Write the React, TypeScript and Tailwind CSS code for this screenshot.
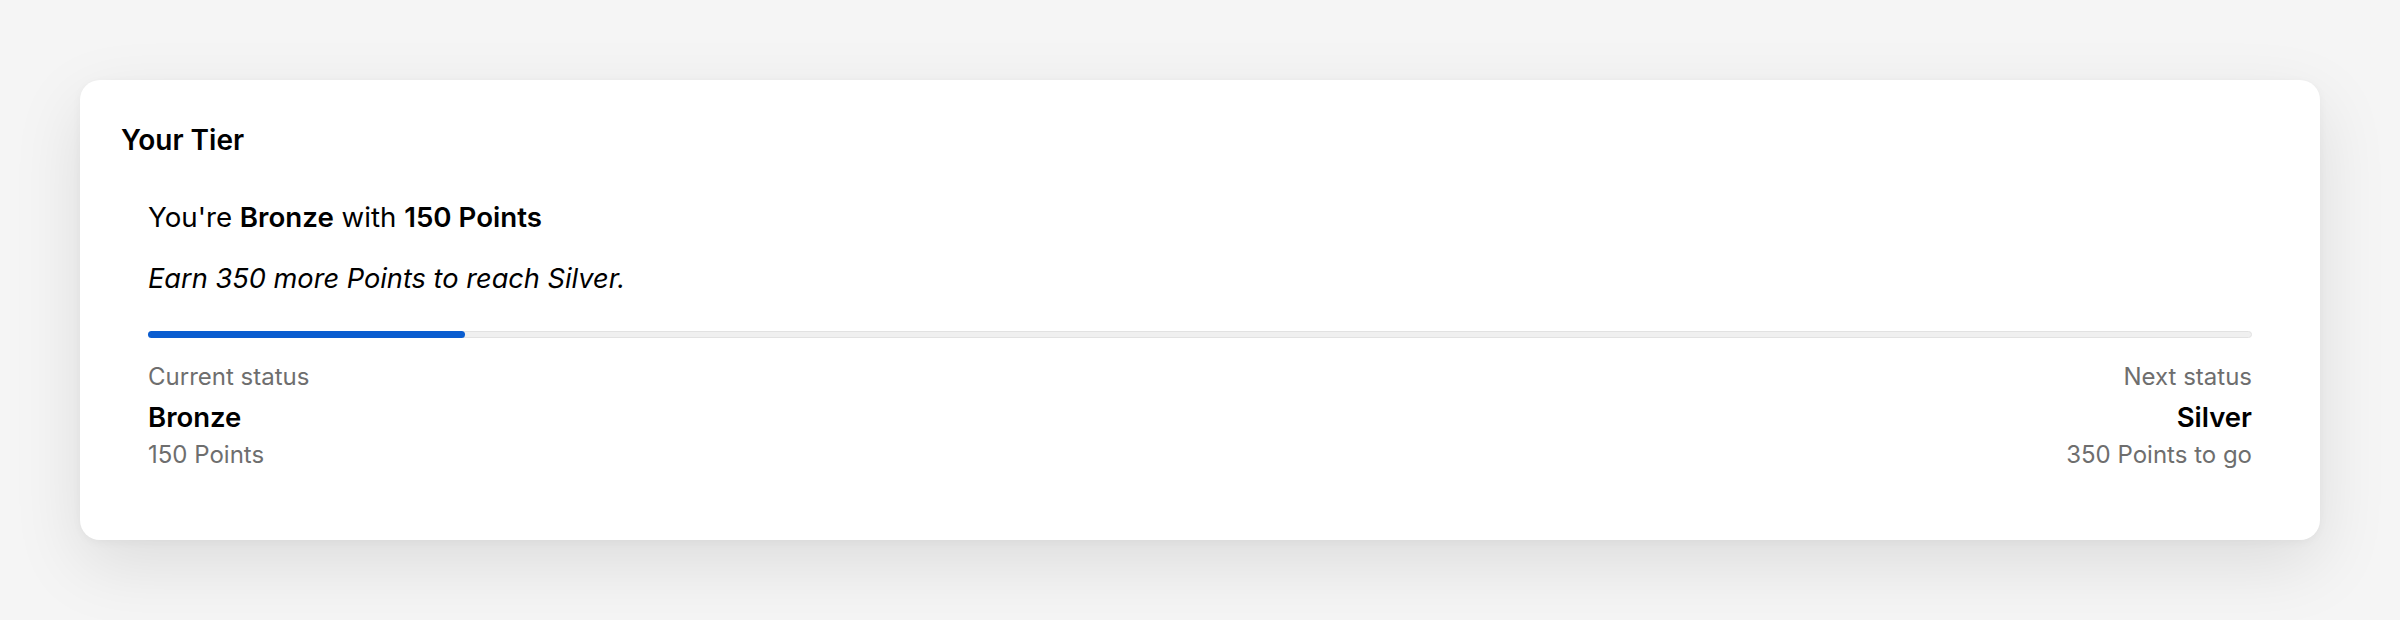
const tier = {
  current: 'Bronze',
  next: 'Silver',
  points: 150,
  target: 500,
}

export default function App() {
  const remaining = tier.target - tier.points
  const progress = 15.1

  return (
    <div className="min-h-screen bg-[#f5f5f5] p-20 font-['Inter','Liberation_Sans',sans-serif] text-black">
      <div className="rounded-[20px] bg-white px-[41px] pt-[43px] pb-[70px] shadow-[0_24px_70px_rgba(0,0,0,0.10),0_2px_10px_rgba(0,0,0,0.04)]">
        <h2 className="text-[28px] leading-[34px] font-semibold">Your Tier</h2>

        <div className="mt-[42px] px-[27px]">
          <p className="text-[27.7px] leading-[36px]">
            You're <span className="font-semibold">{tier.current}</span> with{' '}
            <span className="font-semibold">{tier.points} Points</span>
          </p>
          <p className="mt-[26px] text-[27.2px] leading-[36px] italic">
            Earn {remaining} more Points to reach {tier.next}.
          </p>

          {/* progress track */}
          <div className="mt-[34px] h-[7px] rounded-full border border-[#e2e2e2] bg-[#f0f0f0] relative">
            <div
              className="absolute -inset-y-px -left-px rounded-full bg-[#0a5dd0]"
              style={{ width: `${progress}%` }}
            />
          </div>

          <div className="mt-6 flex justify-between">
            <div>
              <div className="text-[24px] leading-[30px] text-[#6e6e6e]">Current status</div>
              <div className="mt-2 text-[27.5px] leading-[34px] font-semibold">{tier.current}</div>
              <div className="mt-[6px] text-[24px] leading-[30px] text-[#6e6e6e]">{tier.points} Points</div>
            </div>
            <div className="text-right">
              <div className="text-[24px] leading-[30px] text-[#6e6e6e]">Next status</div>
              <div className="mt-2 text-[27.5px] leading-[34px] font-semibold">{tier.next}</div>
              <div className="mt-[6px] text-[24px] leading-[30px] text-[#6e6e6e]">{remaining} Points to go</div>
            </div>
          </div>
        </div>
      </div>
    </div>
  )
}
